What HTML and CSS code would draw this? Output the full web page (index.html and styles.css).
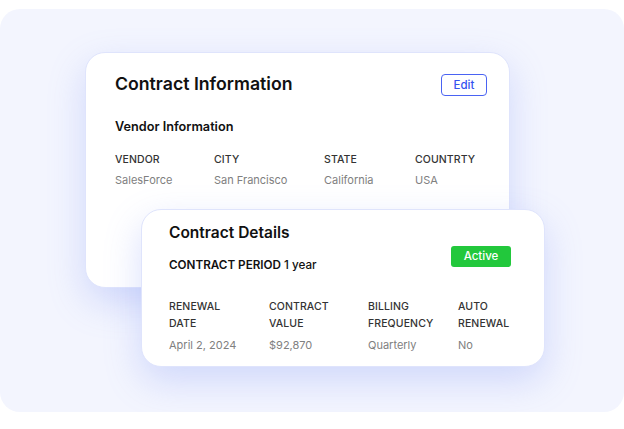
FILE: index.html
```html
<!DOCTYPE html>
<html>
<head>
<meta charset="utf-8">
<link rel="stylesheet" href="styles.css">
</head>
<body>
<div class="panel">
  <div class="stack">
    <section class="card card-info">
      <div class="info-head">
        <h1 class="title">Contract Information</h1>
        <button class="edit-btn">Edit</button>
      </div>
      <h2 class="subtitle">Vendor Information</h2>
      <div class="grid grid-info">
        <div class="label">VENDOR</div>
        <div class="label">CITY</div>
        <div class="label">STATE</div>
        <div class="label">COUNTRTY</div>
        <div class="value">SalesForce</div>
        <div class="value">San Francisco</div>
        <div class="value">California</div>
        <div class="value">USA</div>
      </div>
    </section>
    <section class="card card-details">
      <h1 class="title title-sm">Contract Details</h1>
      <div class="period-row">
        <div class="period">CONTRACT PERIOD <span class="period-val">1 year</span></div>
        <span class="badge">Active</span>
      </div>
      <div class="grid grid-details">
        <div class="label">RENEWAL<br>DATE</div>
        <div class="label">CONTRACT<br>VALUE</div>
        <div class="label">BILLING<br>FREQUENCY</div>
        <div class="label">AUTO<br>RENEWAL</div>
        <div class="value">April 2, 2024</div>
        <div class="value">$92,870</div>
        <div class="value">Quarterly</div>
        <div class="value">No</div>
      </div>
    </section>
  </div>
</div>
</body>
</html>
```

FILE: styles.css
```css
* { box-sizing: border-box; }
html, body { margin: 0; padding: 0; background: #ffffff; }
body { font-family: "Inter", "Liberation Sans", sans-serif; color: #111; }

.panel {
  margin-top: 9px;
  width: 624px;
  height: 403px;
  background: #f3f5fe;
  border-radius: 20px;
}

.stack {
  display: grid;
}

.card {
  grid-area: 1 / 1;
  background: #ffffff;
  border: 1px solid #dfe4fc;
  border-radius: 20px;
  box-shadow: 0 14px 36px rgba(130, 148, 245, 0.3);
}

.card-info {
  margin: 43px 0 0 85px;
  width: 425px;
  height: 236px;
  padding: 20px 22px 0 29px;
}

.card-details {
  margin: 200px 0 0 141px;
  width: 404px;
  height: 158px;
  padding: 13px 33px 0 27px;
}

.info-head {
  display: flex;
  justify-content: space-between;
  align-items: flex-start;
}

.title {
  margin: 0;
  font-size: 17.7px;
  font-weight: 600;
  line-height: 22px;
}

.title-sm {
  font-size: 15.5px;
  line-height: 20px;
}

.edit-btn {
  margin-top: 1px;
  width: 46px;
  height: 22px;
  border: 1.5px solid #4a63f3;
  border-radius: 4px;
  background: #fff;
  color: #3553f0;
  font-family: inherit;
  font-size: 11.5px;
  font-weight: 500;
  padding: 0;
}

.subtitle {
  margin: 23px 0 0;
  font-size: 12.7px;
  font-weight: 600;
  line-height: 16px;
}

.grid {
  display: grid;
}

.grid-info {
  margin-top: 17px;
  row-gap: 4px;
  grid-template-columns: 99px 110px 91px auto;
}

.grid-details {
  margin-top: 25px;
  row-gap: 5px;
  grid-template-columns: 100px 99px 90px auto;
}

.label {
  font-size: 10.5px;
  font-weight: 500;
  color: #333;
  line-height: 16px;
  letter-spacing: 0.1px;
}

.grid-details .label {
  line-height: 17px;
}

.value {
  font-size: 11px;
  color: #808080;
  line-height: 16px;
}

.period-row {
  display: flex;
  justify-content: space-between;
  align-items: flex-start;
  margin-top: 3px;
}

.period {
  margin-top: 11px;
  font-size: 11.7px;
  font-weight: 600;
  line-height: 16px;
}

.period-val { font-weight: 500; }

.badge {
  width: 60px;
  height: 21px;
  background: #22c83c;
  color: #fff;
  border-radius: 3px;
  font-size: 11.5px;
  font-weight: 500;
  line-height: 21px;
  text-align: center;
}
```
